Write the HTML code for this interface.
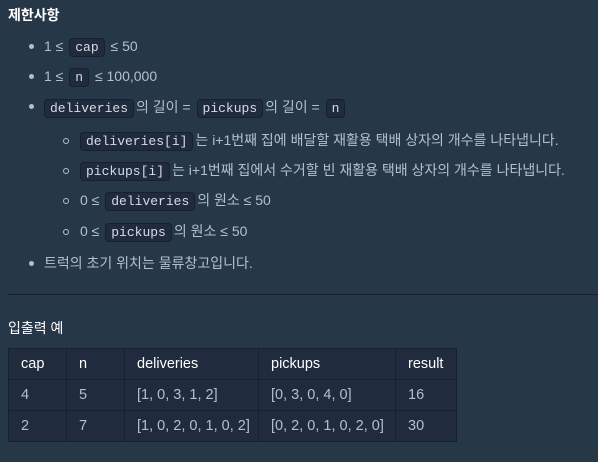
<!DOCTYPE html>
<html><head><meta charset="utf-8"><style>
body{margin:0;width:598px;height:462px;background:#263747;font-family:"Liberation Sans","Noto Sans CJK KR",sans-serif;color:#b2c0cc;font-size:14px;overflow:hidden;position:relative}
.l{position:absolute;white-space:nowrap;line-height:20px}
code{font-family:"Liberation Mono","DejaVu Sans Mono",monospace;font-size:13px;background:#202b3d;border:1px solid #172030;border-radius:4px;padding:1px 5px;color:#d5dde5;margin:0 2px}
.b{position:absolute;width:5px;height:5px;border-radius:50%;background:#b2c0cc}
.c{position:absolute;width:4px;height:4px;border-radius:50%;border:1px solid #b2c0cc}
h{position:absolute;color:#fff;font-weight:bold;font-size:14px}
table{position:absolute;left:8px;top:348px;border-collapse:collapse;font-size:14.5px}
td{border:1px solid #172030;background:#202b3d;height:31px;padding:0 0 0 12px;box-sizing:border-box;color:#b2c0cc}
tr:first-child td{color:#fff}
</style></head><body>
<h style="left:8px;top:5px">제한사항</h>
<div class="b" style="left:29px;top:44px"></div>
<div class="l" style="left:44px;top:36px">1 ≤ <code>cap</code> ≤ 50</div>
<div class="b" style="left:29px;top:74px"></div>
<div class="l" style="left:44px;top:66px">1 ≤ <code>n</code> ≤ 100,000</div>
<div class="b" style="left:29px;top:104px"></div>
<div class="l" style="left:42px;top:97px"><code>deliveries</code>의 길이 = <code>pickups</code>의 길이 = <code>n</code></div>
<div class="c" style="left:63px;top:138px"></div>
<div class="l" style="left:78px;top:130px"><code>deliveries[i]</code>는 i+1번째 집에 배달할 재활용 택배 상자의 개수를 나타냅니다.</div>
<div class="c" style="left:63px;top:168px"></div>
<div class="l" style="left:78px;top:160px"><code>pickups[i]</code>는 i+1번째 집에서 수거할 빈 재활용 택배 상자의 개수를 나타냅니다.</div>
<div class="c" style="left:63px;top:198px"></div>
<div class="l" style="left:80px;top:190px">0 ≤ <code>deliveries</code>의 원소 ≤ 50</div>
<div class="c" style="left:63px;top:229px"></div>
<div class="l" style="left:80px;top:221px">0 ≤ <code>pickups</code>의 원소 ≤ 50</div>
<div class="b" style="left:29px;top:261px"></div>
<div class="l" style="left:44px;top:253px">트럭의 초기 위치는 물류창고입니다.</div>
<div style="position:absolute;left:8px;top:294px;width:590px;height:1px;background:#172030"></div>
<h style="left:8px;top:318px;font-weight:normal;color:#fff">입출력 예</h>
<table>
<tr><td style="width:58px">cap</td><td style="width:58px">n</td><td style="width:134px">deliveries</td><td style="width:137px">pickups</td><td style="width:61px">result</td></tr>
<tr><td>4</td><td>5</td><td>[1, 0, 3, 1, 2]</td><td>[0, 3, 0, 4, 0]</td><td>16</td></tr>
<tr><td>2</td><td>7</td><td>[1, 0, 2, 0, 1, 0, 2]</td><td>[0, 2, 0, 1, 0, 2, 0]</td><td>30</td></tr>
</table>
</body></html>
